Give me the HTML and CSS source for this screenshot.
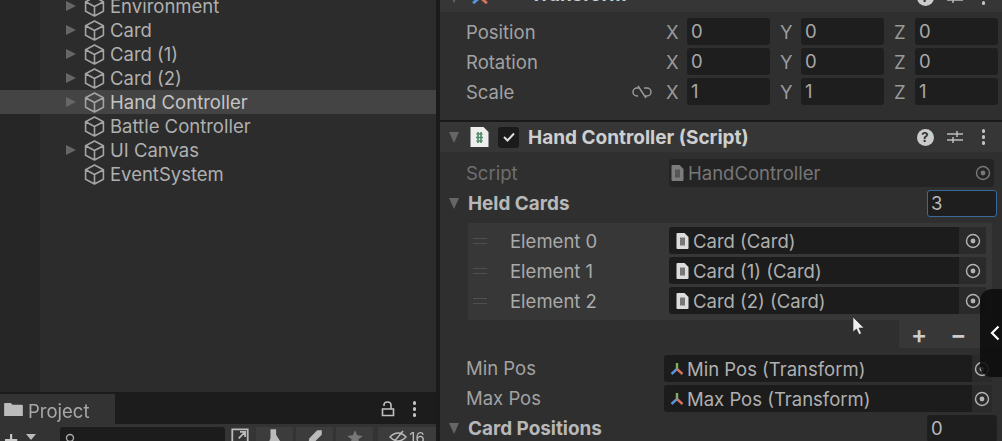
FILE: index.html
```html
<!DOCTYPE html>
<html lang="en">
<head>
    <meta charset="UTF-8">
    <title>Unity Editor - Hand Controller</title>
    <link rel="stylesheet" href="styles.css">
</head>
<body>
    <svg class="defs" width="0" height="0">
        <symbol id="cube" viewBox="0 0 20 20">
            <path d="M10 1 18.500 5.500V14.500L10 19 1.500 14.500V5.500Z M1.500 5.500 10 10 18.500 5.500 M10 10V19" fill="none" stroke="currentColor" stroke-width="1.5" stroke-linejoin="round"/>
        </symbol>
        <symbol id="target" viewBox="0 0 16 16">
            <circle cx="8" cy="8" r="6.5" fill="none" stroke="currentColor" stroke-width="1.4"/>
            <circle cx="8" cy="8" r="2.4" fill="currentColor"/>
        </symbol>
        <symbol id="doc" viewBox="0 0 12 16">
            <path d="M1 0H8L12 4V15a1 1 0 0 1-1 1H1a1 1 0 0 1-1-1V1a1 1 0 0 1 1-1Z" fill="currentColor"/>
            <rect x="3.500" y="4.500" width="5" height="8" fill="#777"/>
        </symbol>
        <symbol id="axes" viewBox="0 0 16 16">
            <path d="M8 8V2" stroke="#7fb35a" stroke-width="2.4"/>
            <path d="M8 8 2.500 13" stroke="#5a94d8" stroke-width="2.4"/>
            <path d="M8 8 13.500 13" stroke="#d8705a" stroke-width="2.4"/>
        </symbol>
    </svg>

    <div class="app">
        <div class="left-col">
            <div class="hierarchy">
                <div class="tree-row"><span class="arrow"></span><svg class="cube"><use href="#cube"/></svg>Environment</div>
                <div class="tree-row"><span class="arrow"></span><svg class="cube"><use href="#cube"/></svg>Card</div>
                <div class="tree-row"><span class="arrow"></span><svg class="cube"><use href="#cube"/></svg>Card (1)</div>
                <div class="tree-row"><span class="arrow"></span><svg class="cube"><use href="#cube"/></svg>Card (2)</div>
                <div class="tree-row selected"><span class="arrow"></span><svg class="cube"><use href="#cube"/></svg>Hand Controller</div>
                <div class="tree-row"><span class="arrow none"></span><svg class="cube"><use href="#cube"/></svg>Battle Controller</div>
                <div class="tree-row"><span class="arrow"></span><svg class="cube"><use href="#cube"/></svg>UI Canvas</div>
                <div class="tree-row"><span class="arrow none"></span><svg class="cube"><use href="#cube"/></svg>EventSystem</div>
            </div>
            <div class="tab-bar">
                <div class="tab">
                    <svg class="folder" viewBox="0 0 20 16"><path d="M0 2a1 1 0 0 1 1-1H7L9 3H19a1 1 0 0 1 1 1V14a1 1 0 0 1-1 1H1a1 1 0 0 1-1-1Z" fill="currentColor"/></svg>
                    <span class="tab-name">Project</span>
                </div>
                <div class="tab-tools">
                    <svg class="lock" viewBox="0 0 14 16"><path d="M3 5V4a3.500 3 0 0 1 7 0V8M1.500 8H12.500V14.500H1.500Z" fill="none" stroke="currentColor" stroke-width="1.6"/></svg>
                    <span class="dots"><i></i><i></i><i></i></span>
                </div>
            </div>
            <div class="toolbar">
                <span class="add">+</span><span class="add-caret"></span>
                <div class="search"><svg class="glass" viewBox="0 0 12 12"><circle cx="5" cy="5" r="3.5" fill="none" stroke="currentColor" stroke-width="1.4"/></svg></div>
                <div class="tool-btn square"><svg viewBox="0 0 14 14"><path d="M1 1H13V13H1Z M6 8 11 3M7 3H11V7" fill="none" stroke="currentColor" stroke-width="1.4"/></svg></div>
                <div class="tool-btn"><svg viewBox="0 0 16 16"><path d="M4 1H9V6L14 14H2L4 9Z" fill="currentColor"/></svg></div>
                <div class="tool-btn"><svg viewBox="0 0 16 16"><path d="M2 14 3 9 10 2H14V6L7 13Z" fill="currentColor"/></svg></div>
                <div class="tool-btn"><svg viewBox="0 0 16 16"><path d="M8 2 10 6.500 15 7 11 10 12.500 15 8 12 3.500 15 5 10 1 7 6 6.500Z" fill="#777"/></svg></div>
                <div class="tool-btn wide"><svg viewBox="0 0 18 14"><path d="M1 7Q9-1 17 7 9 15 1 7ZM4 13 14 1" fill="none" stroke="currentColor" stroke-width="1.5"/></svg><span>16</span></div>
            </div>
        </div>

        <div class="inspector">
            <div class="comp-header clipped">
                <span class="fold"></span>
                <svg class="axes-big" viewBox="0 0 16 16"><use href="#axes"/></svg>
                <span class="comp-title">Transform</span>
                <div class="comp-tools">
                    <span class="help">?</span>
                    <svg class="sliders" viewBox="0 0 16 16"><path d="M0 5H16M0 11H16M10 2V8M6 8V14" stroke="currentColor" stroke-width="1.5"/></svg>
                    <span class="dots"><i></i><i></i><i></i></span>
                </div>
            </div>
            <div class="transform">
                <div class="vec-row">
                    <span class="prop-label">Position</span>
                    <div class="vec-cell"><span class="axis">X</span><span class="num">0</span></div>
                    <div class="vec-cell"><span class="axis">Y</span><span class="num">0</span></div>
                    <div class="vec-cell"><span class="axis">Z</span><span class="num">0</span></div>
                </div>
                <div class="vec-row">
                    <span class="prop-label">Rotation</span>
                    <div class="vec-cell"><span class="axis">X</span><span class="num">0</span></div>
                    <div class="vec-cell"><span class="axis">Y</span><span class="num">0</span></div>
                    <div class="vec-cell"><span class="axis">Z</span><span class="num">0</span></div>
                </div>
                <div class="vec-row">
                    <span class="prop-label">Scale
                        <svg class="link" viewBox="0 0 20 14"><path d="M8 3H5a4 4 0 0 0 0 8h1M12 3h3a4 4 0 0 1 0 8h-3M6 1 14 13" fill="none" stroke="currentColor" stroke-width="1.5"/></svg>
                    </span>
                    <div class="vec-cell"><span class="axis">X</span><span class="num">1</span></div>
                    <div class="vec-cell"><span class="axis">Y</span><span class="num">1</span></div>
                    <div class="vec-cell"><span class="axis">Z</span><span class="num">1</span></div>
                </div>
            </div>

            <div class="comp-header">
                <span class="fold"></span>
                <svg class="script-icon" viewBox="0 0 18 20">
                    <path d="M0 0H13L18 5V20H0Z" fill="#eee"/>
                    <path d="M6 7H12M5.500 10.500H12.500M6 14H12M7.500 5V16M10.500 5V16" stroke="#4f8a68" stroke-width="1.6"/>
                </svg>
                <span class="check"><svg viewBox="0 0 12 10"><path d="M1 5 4.500 8.500 11 1.500" fill="none" stroke="#ddd" stroke-width="2"/></svg></span>
                <span class="comp-title">Hand Controller (Script)</span>
                <div class="comp-tools">
                    <span class="help">?</span>
                    <svg class="sliders" viewBox="0 0 16 16"><path d="M0 5H16M0 11H16M10 2V8M6 8V14" stroke="currentColor" stroke-width="1.5"/></svg>
                    <span class="dots"><i></i><i></i><i></i></span>
                </div>
            </div>

            <div class="props">
                <div class="prop-row script-row">
                    <span class="prop-label dim">Script</span>
                    <div class="obj-field dim">
                        <svg class="doc"><use href="#doc"/></svg>HandController
                        <svg class="target"><use href="#target"/></svg>
                    </div>
                </div>
                <div class="prop-row list-head">
                    <span class="fold small"></span><span class="bold-label">Held Cards</span>
                    <span class="count focused">3</span>
                </div>
                <div class="list-box">
                    <div class="element">
                        <span class="handle"></span><span class="el-label">Element 0</span>
                        <div class="obj-field"><svg class="doc"><use href="#doc"/></svg>Card (Card)<span class="picker"><svg class="target"><use href="#target"/></svg></span></div>
                    </div>
                    <div class="element">
                        <span class="handle"></span><span class="el-label">Element 1</span>
                        <div class="obj-field"><svg class="doc"><use href="#doc"/></svg>Card (1) (Card)<span class="picker"><svg class="target"><use href="#target"/></svg></span></div>
                    </div>
                    <div class="element">
                        <span class="handle"></span><span class="el-label">Element 2</span>
                        <div class="obj-field"><svg class="doc"><use href="#doc"/></svg>Card (2) (Card)<span class="picker"><svg class="target"><use href="#target"/></svg></span></div>
                    </div>
                </div>
                <div class="list-foot"><div class="foot-btns"><span>+</span><span>−</span></div></div>
                <div class="prop-row ref-row">
                    <span class="prop-label">Min Pos</span>
                    <div class="obj-field"><svg class="doc"><use href="#axes"/></svg>Min Pos (Transform)<span class="picker"><svg class="target"><use href="#target"/></svg></span></div>
                </div>
                <div class="prop-row ref-row">
                    <span class="prop-label">Max Pos</span>
                    <div class="obj-field"><svg class="doc"><use href="#axes"/></svg>Max Pos (Transform)<span class="picker"><svg class="target"><use href="#target"/></svg></span></div>
                </div>
                <div class="prop-row list-head">
                    <span class="fold small"></span><span class="bold-label">Card Positions</span>
                    <span class="count">0</span>
                </div>
            </div>
        </div>

        <svg class="cursor" viewBox="0 0 12 18"><path d="M0 0V15L3.500 12 6 17.500 8.500 16.500 6 11H11Z" fill="#eee" stroke="#222" stroke-width=".6"/></svg>
        <div class="side-tab"><svg viewBox="0 0 10 16"><path d="M8.500 1.500 2 8 8.500 14.500" fill="none" stroke="#fff" stroke-width="2.2"/></svg></div>
    </div>
</body>
</html>
```

FILE: styles.css
```css
html, body {
    margin: 0;
    padding: 0;
    height: 441px;
    overflow: hidden;
    background-color: #1b1b1b;
}
.defs {
    position: absolute;
}
.app {
    position: relative;
    display: flex;
    width: 1002px;
    height: 441px;
    overflow: hidden;
    font-family: Inter, "Liberation Sans", sans-serif;
    font-size: 18.5px;
    color: #b4b4b4;
    filter: blur(0.7px);
}

/* left side */
.left-col {
    width: 436px;
    margin-right: 4px;
    display: flex;
    flex-direction: column;
    flex-shrink: 0;
}
.hierarchy {
    height: 392px;
    overflow: hidden;
    background: linear-gradient(to right, #262626 40px, #2c2c2c 40px);
    flex-shrink: 0;
}
.tree-row {
    height: 24px;
    display: flex;
    align-items: center;
    padding-left: 66px;
    color: #b0b0b0;
}
.tree-row:first-child {
    margin-top: -6px;
}
.tree-row.selected {
    background-color: #444;
    color: #c4c4c4;
}
.arrow {
    width: 0;
    height: 0;
    border-left: 10px solid #666;
    border-top: 5.5px solid transparent;
    border-bottom: 5.5px solid transparent;
    margin-right: 8px;
}
.arrow.none {
    border-left-color: transparent;
}
.cube {
    width: 21px;
    height: 21px;
    margin-right: 5px;
    color: #a4a4a4;
}
.tab-bar {
    height: 30px;
    margin-top: 2px;
    display: flex;
    justify-content: space-between;
    background-color: #1c1c1c;
    flex-shrink: 0;
}
.tab {
    width: 115px;
    box-sizing: border-box;
    padding-left: 4px;
    display: flex;
    align-items: center;
    gap: 5px;
    background-color: #333;
    color: #a8a8a8;
}
.tab-name {
    padding-top: 3px;
}
.folder {
    width: 19px;
    height: 15px;
    color: #bbb;
}
.tab-tools {
    display: flex;
    align-items: center;
    gap: 18px;
    padding-right: 20px;
}
.lock {
    width: 14px;
    height: 16px;
    color: #c0c0c0;
}
.dots {
    display: flex;
    flex-direction: column;
    gap: 2.5px;
}
.dots i {
    width: 3.5px;
    height: 3.5px;
    border-radius: 50%;
    background-color: #c4c4c4;
}
.toolbar {
    flex: 1;
    min-height: 0;
    overflow: hidden;
    display: flex;
    align-items: flex-start;
    padding-top: 3px;
    background-color: #333;
}
.add {
    margin-left: 2px;
    width: 20px;
    font-size: 26px;
    line-height: 22px;
    text-align: center;
    color: #c8c8c8;
}
.add-caret {
    margin: 7px 24px 0 6px;
    border-top: 6px solid #bbb;
    border-left: 5px solid transparent;
    border-right: 5px solid transparent;
}
.search {
    width: 165px;
    height: 20px;
    padding-left: 5px;
    box-sizing: border-box;
    background-color: #1c1c1c;
    border-radius: 3px;
    flex-shrink: 0;
}
.glass {
    width: 12px;
    height: 12px;
    margin-top: 4px;
    color: #aaa;
}
.tool-btn {
    width: 37px;
    height: 20px;
    margin-left: 3px;
    display: flex;
    justify-content: center;
    padding-top: 1px;
    box-sizing: border-box;
    background-color: #3c3c3c;
    color: #bbb;
    flex-shrink: 0;
}
.tool-btn svg {
    width: 18px;
    height: 18px;
}
.tool-btn.square {
    width: 30px;
    margin-left: 0;
    margin-right: -2px;
    background-color: #353535;
}
.tool-btn.wide {
    width: 58px;
    margin-left: 5px;
    gap: 2px;
    font-size: 15px;
}

/* inspector */
.inspector {
    flex: 1;
    background-color: #2f2f2f;
    display: flex;
    flex-direction: column;
    min-width: 0;
    overflow: hidden;
}
.comp-header {
    height: 30px;
    display: flex;
    align-items: center;
    background-color: #363636;
    border-top: 2px solid #191919;
    flex-shrink: 0;
}
.comp-header.clipped {
    margin-top: -20px;
}
.comp-header.clipped .comp-title {
    margin-bottom: 6px;
}
.axes-big {
    width: 20px;
    height: 20px;
    margin-right: 40px;
}
.comp-title {
    font-size: 19px;
    font-weight: 700;
    color: #cfcfcf;
}
.transform {
    height: 108px;
    flex-shrink: 0;
    box-sizing: border-box;
    padding: 6px 4px 0 26px;
    display: flex;
    flex-direction: column;
    gap: 3px;
}
.vec-row {
    display: grid;
    grid-template-columns: 190px repeat(3, 1fr);
    column-gap: 10px;
    height: 27px;
    align-items: center;
}
.vec-row .prop-label {
    margin-right: -10px;
    display: flex;
    justify-content: space-between;
    align-items: center;
    padding-right: 14px;
}
.link {
    width: 20px;
    height: 14px;
    color: #999;
}
.prop-label {
    color: #a2a2a2;
}
.vec-cell {
    display: flex;
    align-items: center;
}
.axis {
    width: 21px;
    color: #999;
}
.num {
    flex: 1;
    height: 27px;
    line-height: 27px;
    padding-left: 4px;
    background-color: #1e1e1e;
    border-radius: 3px;
    color: #a8a8a8;
}
.fold {
    width: 0;
    height: 0;
    margin: 0 11px 0 9px;
    border-top: 11px solid #666;
    border-left: 5.5px solid transparent;
    border-right: 5.5px solid transparent;
}
.fold.small {
    margin-right: 9px;
}
.script-icon {
    width: 19px;
    height: 20px;
    margin-right: 9px;
}
.check {
    width: 21px;
    height: 21px;
    margin-right: 9px;
    display: flex;
    align-items: center;
    justify-content: center;
    background-color: #1b1b1b;
    border-radius: 3px;
}
.check svg {
    width: 12px;
    height: 10px;
}
.comp-tools {
    margin-left: auto;
    padding-right: 17px;
    display: flex;
    align-items: center;
    gap: 13px;
}
.comp-tools .dots {
    margin-left: 6px;
}
.help {
    width: 17px;
    height: 17px;
    border-radius: 50%;
    background-color: #ccc;
    color: #333;
    font-size: 13px;
    font-weight: 700;
    line-height: 17px;
    text-align: center;
}
.sliders {
    width: 16px;
    height: 16px;
    color: #bbb;
}
.props {
    padding: 7px 4px 0 0;
    display: flex;
    flex-direction: column;
}
.prop-row {
    display: flex;
    align-items: center;
    height: 27px;
    margin-bottom: 3px;
    flex-shrink: 0;
}
.prop-row > .prop-label {
    margin-left: 26px;
    flex-shrink: 0;
}
.script-row {
    height: 28px;
}
.script-row > .prop-label {
    width: 203px;
}
.script-row .obj-field {
    height: 28px;
    padding-left: 2px;
    margin-right: 4px;
}
.ref-row > .prop-label {
    width: 198px;
    margin-bottom: 2px;
}
.dim {
    opacity: 0.55;
}
.bold-label {
    font-size: 18.9px;
    font-weight: 700;
    color: #b8b8b8;
}
.count {
    margin-left: auto;
    width: 70px;
    height: 27px;
    box-sizing: border-box;
    line-height: 25px;
    padding-left: 3px;
    margin-right: 1px;
    background-color: #1e1e1e;
    border: 1px solid #1e1e1e;
    border-radius: 3px;
    color: #b8b8b8;
}
.count.focused {
    border-color: #3a6a9a;
}
.obj-field {
    flex: 1;
    height: 27px;
    position: relative;
    display: flex;
    align-items: center;
    padding-left: 7px;
    background-color: #1c1c1c;
    border-radius: 3px;
    color: #b0b0b0;
}
.obj-field.dim .target {
    position: absolute;
    right: 3px;
}
.doc {
    width: 13px;
    height: 16px;
    margin-right: 4px;
    color: #ddd;
    flex-shrink: 0;
}
.obj-field.dim .doc {
    color: #bbb;
}
.target {
    width: 16px;
    height: 16px;
    color: #b4b4b4;
}
.picker {
    margin-left: auto;
    width: 27px;
    height: 27px;
    display: flex;
    align-items: center;
    justify-content: center;
    background-color: #2a2a2a;
    border-radius: 0 3px 3px 0;
}
.list-box {
    margin: 3px 6px 0 28px;
    height: 97px;
    flex-shrink: 0;
    box-sizing: border-box;
    padding: 4px 6px 6px 0;
    display: flex;
    flex-direction: column;
    gap: 3px;
    background-color: #373737;
}
.element {
    display: flex;
    align-items: center;
    height: 27px;
}
.handle {
    width: 14px;
    height: 4px;
    margin: 0 23px 0 5px;
    border-top: 1px solid #505050;
    border-bottom: 1px solid #505050;
}
.el-label {
    width: 159px;
    flex-shrink: 0;
    color: #aaa;
}
.list-foot {
    height: 35px;
    display: flex;
    justify-content: flex-end;
    flex-shrink: 0;
}
.foot-btns {
    width: 103px;
    height: 28px;
    display: flex;
    align-items: center;
    background-color: #373737;
    color: #ccc;
    font-size: 24px;
    font-weight: 600;
    box-sizing: border-box;
    padding-left: 12px;
    gap: 23px;
    margin-right: -4px;
}
.ref-row .obj-field {
    padding-left: 5px;
    margin-right: 6px;
}
.ref-row .doc {
    width: 16px;
    margin-right: 2px;
}
.ref-row .picker {
    width: 20px;
}
.cursor {
    position: absolute;
    left: 853px;
    top: 317px;
    width: 12px;
    height: 18px;
}
.side-tab {
    position: absolute;
    right: 0;
    top: 289px;
    width: 22px;
    height: 88px;
    background-color: rgba(12, 12, 12, 0.88);
    border-radius: 12px 0 0 12px;
    display: flex;
    align-items: center;
    justify-content: flex-end;
    padding-right: 2px;
    box-sizing: border-box;
}
.side-tab svg {
    width: 10px;
    height: 16px;
}
```
